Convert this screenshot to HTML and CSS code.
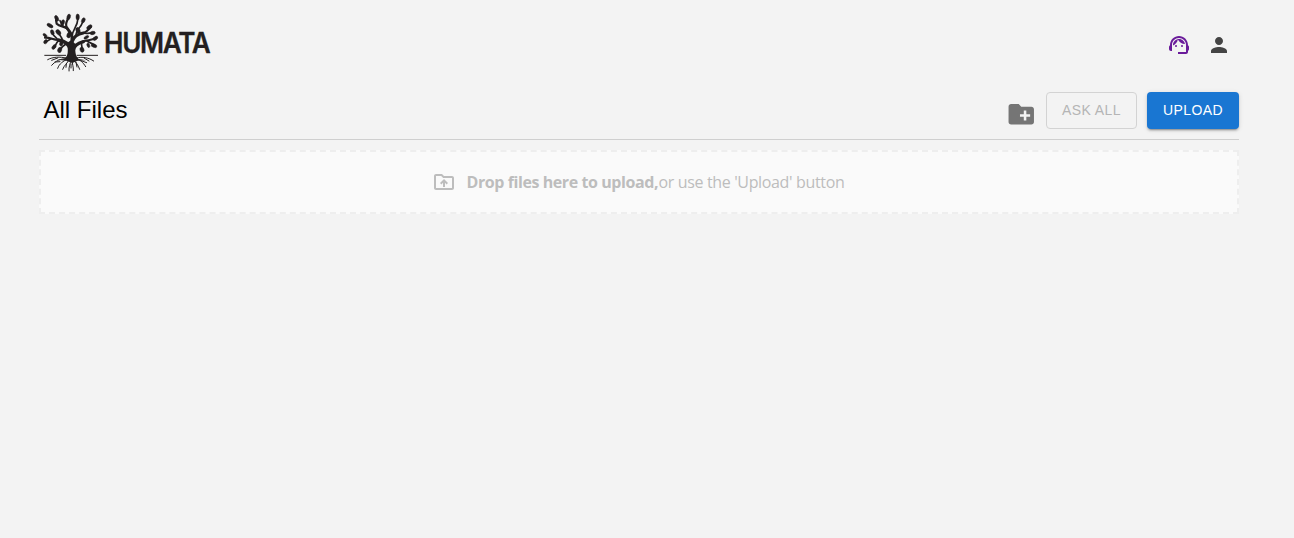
FILE: index.html
```html
<!DOCTYPE html>
<html lang="en">
<head>
<meta charset="utf-8">
<title>Humata</title>
<link rel="stylesheet" href="styles.css">
</head>
<body>
<div class="page">
  <header class="header">
    <div class="brand">
      <svg class="tree" viewBox="0 0 210 210" aria-hidden="true">
        <path class="fill" d="M84 153c12-8 12-20 11-35l-1-14 12-8 12 12c0 18-2 34 10 45l22 4-25 1-16 7-18-7-28-3z"/>
        <g class="limb">
          <path stroke-width="13" d="M105 148L106 108"/>
          <path stroke-width="10" d="M103 126C99 108 86 98 67 96M111 128C114 112 127 105 142 101"/>
          <path stroke-width="9" d="M105 112C110 92 110 82 100 70L93 60M108 102C114 84 127 77 142 75"/>
          <path stroke-width="6.500" d="M93 60C85 47 94 38 98 28M94 62C83 53 72 57 62 47L60 36M67 96C51 96 43 88 27 89M142 75C153 72 158 64 165 57M142 101C155 94 166 100 181 88"/>
          <path stroke-width="5" d="M120 84C119 66 134 60 139 44M108 86C108 65 124 60 126 31M80 99C78 85 69 81 65 71M68 97C59 106 60 110 55 119M90 108C82 113 76 117 73 124M136 104C137 115 139 119 138 126M152 98C159 106 168 103 176 112M142 75C155 78 161 74 170 75M83 56C75 50 76 43 72 38M45 92C36 97 34 101 28 101M63 92C54 85 51 80 49 74"/>
        </g>
        <g class="fill leaves">
          <ellipse cx="62" cy="31" rx="5" ry="9" transform="rotate(-25 62 31)"/>
          <ellipse cx="98" cy="27" rx="5" ry="9" transform="rotate(18 98 27)"/>
          <ellipse cx="125" cy="27" rx="5" ry="9"/>
          <ellipse cx="142" cy="37" rx="5" ry="8" transform="rotate(25 142 37)"/>
          <ellipse cx="80" cy="44" rx="5" ry="9" transform="rotate(20 80 44)"/>
          <ellipse cx="42" cy="53" rx="5" ry="10" transform="rotate(-60 42 53)"/>
          <ellipse cx="49" cy="73" rx="5" ry="8" transform="rotate(-20 49 73)"/>
          <ellipse cx="67" cy="73" rx="6" ry="9" transform="rotate(-40 67 73)"/>
          <ellipse cx="99" cy="81" rx="6" ry="9" transform="rotate(20 99 81)"/>
          <ellipse cx="126" cy="67" rx="6" ry="9" transform="rotate(-20 126 67)"/>
          <ellipse cx="160" cy="57" rx="5" ry="9" transform="rotate(55 160 57)"/>
          <ellipse cx="170" cy="75" rx="5" ry="8" transform="rotate(80 170 75)"/>
          <ellipse cx="178" cy="91" rx="5" ry="8" transform="rotate(55 178 91)"/>
          <ellipse cx="174" cy="113" rx="5" ry="9" transform="rotate(-70 174 113)"/>
          <ellipse cx="138" cy="125" rx="6" ry="8" transform="rotate(-20 138 125)"/>
          <ellipse cx="71" cy="126" rx="6" ry="8" transform="rotate(20 71 126)"/>
          <ellipse cx="54" cy="117" rx="5" ry="8" transform="rotate(40 54 117)"/>
          <ellipse cx="29" cy="101" rx="5" ry="7" transform="rotate(40 29 101)"/>
          <ellipse cx="27" cy="82" rx="4" ry="7" transform="rotate(-50 27 82)"/>
          <ellipse cx="76" cy="106" rx="5" ry="8" transform="rotate(15 76 106)"/>
          <ellipse cx="151" cy="88" rx="4" ry="8" transform="rotate(60 151 88)"/>
          <ellipse cx="157" cy="112" rx="4" ry="7" transform="rotate(-20 157 112)"/>
        </g>
        <path class="line" d="M25 142H90M122 142H186"/>
        <g class="limb" stroke-width="3">
          <path d="M90 150C72 146 51 146 35 155M91 152C74 152 59 158 47 172M94 153C82 160 70 166 65 181M99 154C95 167 84 171 80 184M104 154C105 168 97 175 99 189M108 154C108 169 113 175 112 188M112 153C119 164 126 169 131 184M118 152C132 154 141 163 149 176M121 150C140 145 158 149 173 159M65 150L47 157M72 161L57 162M91 168L90 178M105 168L105 180M120 163L123 177M135 158L152 164M144 150L159 159"/>
        </g>
      </svg>
      <div class="wordmark"><span class="name">HUMATA</span></div>
    </div>
    <nav class="account">
      <svg class="icon support" viewBox="0 0 24 24"><path d="M21 12.22C21 6.73 16.74 3 12 3c-4.69 0-9 3.65-9 9.28-.6.34-1 .98-1 1.72v2c0 1.1.9 2 2 2h1v-6.1c0-3.87 3.13-7 7-7s7 3.13 7 7V19h-8v2h8c1.1 0 2-.9 2-2v-1.22c.59-.31 1-.92 1-1.64v-2.3c0-.7-.41-1.31-1-1.62z"/><circle cx="9" cy="13" r="1"/><circle cx="15" cy="13" r="1"/><path d="M18 11.03C17.52 8.18 15.04 6 12.05 6c-3.03 0-6.29 2.51-6.03 6.45 2.47-1.01 4.33-3.21 4.86-5.89 1.31 2.63 4 4.44 7.12 4.47z"/></svg>
      <svg class="icon person" viewBox="0 0 24 24"><path d="M12 12c2.21 0 4-1.79 4-4s-1.79-4-4-4-4 1.790-4 4 1.790 4 4 4zm0 2c-2.670 0-8 1.340-8 4v2h16v-2c0-2.660-5.330-4-8-4z"/></svg>
    </nav>
  </header>
  <main>
    <div class="toolbar">
      <h1 class="title">All Files</h1>
      <div class="actions">
        <svg class="new-folder" viewBox="0 0 24 24"><path d="M20 6h-8l-2-2H4c-1.110 0-1.990.89-1.990 2L2 18c0 1.110.89 2 2 2h16c1.110 0 2-.89 2-2V8c0-1.110-.89-2-2-2zm-1 8h-3v3h-2v-3h-3v-2h3V9h2v3h3v2z"/></svg>
        <button class="button ask" disabled>ASK ALL</button>
        <button class="button upload">UPLOAD</button>
      </div>
    </div>
    <div class="dropzone">
      <svg class="icon" viewBox="0 0 24 24"><path d="M20 6h-8l-2-2H4c-1.100 0-1.990.9-1.990 2L2 18c0 1.100.9 2 2 2h16c1.100 0 2-.9 2-2V8c0-1.100-.9-2-2-2zm0 12H4V6h5.170l2 2H20v10zM9.410 14.420 11 12.840V17h2v-4.160l1.590 1.590L16 13.010 12.010 9 8 13.010z"/></svg>
      <p class="hint"><b class="lead">Drop files here to upload,</b><span class="rest">or use the 'Upload' button</span></p>
    </div>
  </main>
</div>
</body>
</html>
```
FILE: styles.css
```css
* { box-sizing: border-box; }

body {
  margin: 0;
  min-height: 538px;
  background: #f3f3f3;
  font-family: "Liberation Sans", Arial, sans-serif;
}

.page { width: 1200px; margin-left: 39px; }

.header {
  display: flex;
  justify-content: space-between;
  height: 84px;
}

.brand { display: flex; margin-left: -3px; padding-top: 8px; }
.tree { width: 70px; height: 70px; }
.tree .fill { fill: #231f20; }
.tree .leaves { stroke: #231f20; stroke-width: 1.5; }
.tree .limb { fill: none; stroke: #231f20; stroke-linecap: round; }
.tree .line { fill: none; stroke: #231f20; stroke-width: 3; }

.wordmark { margin: 17px 0 0 -2px; }
.name {
  display: inline-block;
  font: 600 28px/37px Inter, sans-serif;
  letter-spacing: -1.4px;
  color: #231f20;
  transform: scaleX(.932);
  transform-origin: 0 0;
  -webkit-text-stroke: .3px #231f20;
}

.account { display: flex; gap: 16px; padding: 33px 8px 0 0; }
.icon { width: 24px; height: 24px; fill: currentColor; }
.support { color: #6a1b9a; }
.person { color: #444; }

.toolbar {
  display: flex;
  justify-content: space-between;
  height: 56px;
  border-bottom: 1px solid #cfcfcf;
}

.title {
  margin: 12px 0 0 4.5px;
  font-size: 24px;
  font-weight: 400;
  line-height: 28px;
  color: #000;
}

.actions { display: flex; align-items: flex-start; padding-top: 8px; }
.new-folder { width: 30.5px; height: 30.5px; margin: 6.5px 10px 0 0; fill: #757575; }

.button {
  height: 37px;
  padding: 0 0 2px;
  border-radius: 4px;
  font: 400 14px "Liberation Sans", Arial, sans-serif;
  letter-spacing: 0.4px;
}
.ask {
  width: 91px;
  margin-right: 10px;
  border: 1px solid #d3d3d3;
  background: transparent;
  color: #b5b5b5;
}
.upload {
  width: 92px;
  border: 0;
  background: #1976d2;
  color: #fff;
  box-shadow: 0 3px 1px -2px rgba(0, 0, 0, .2), 0 2px 2px rgba(0, 0, 0, .14), 0 1px 5px rgba(0, 0, 0, .12);
}

.dropzone {
  display: flex;
  justify-content: center;
  align-items: center;
  gap: 11px;
  height: 64px;
  margin-top: 10px;
  padding-right: 2px;
  border: 2px dashed #eee;
  background: #fafafa;
  color: #bdbdbd;
}
.hint {
  display: flex;
  margin: 0;
  font: 16px/24px "Open Sans", sans-serif;
  white-space: nowrap;
}
.lead { width: 192px; letter-spacing: -0.42px; }
.rest { width: 186px; letter-spacing: -0.35px; }
```
